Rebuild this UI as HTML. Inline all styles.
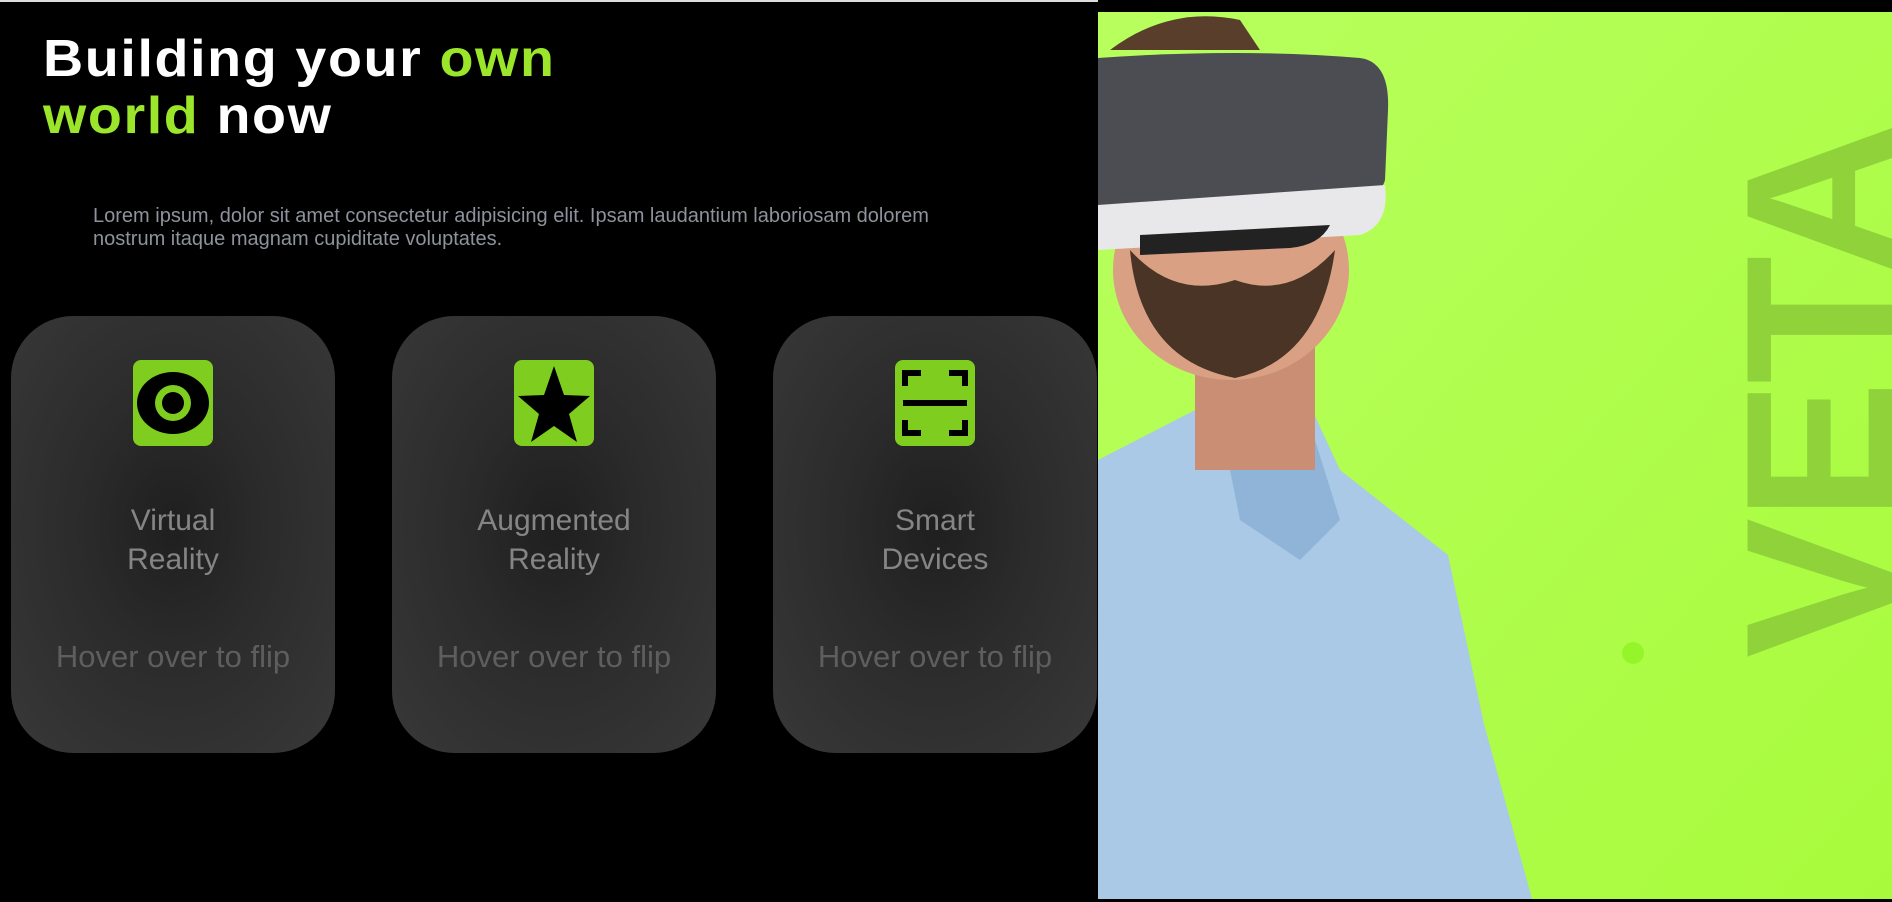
<!DOCTYPE html>
<html><head><meta charset="utf-8"><style>
*{margin:0;padding:0;box-sizing:border-box}
body{width:1892px;height:902px;background:#000;overflow:hidden;position:relative;font-family:"Liberation Sans",sans-serif}
.top{position:absolute;left:0;top:0;width:1892px;height:2px;background:#ddd}
h1{position:absolute;left:43px;top:31px;font-size:52px;line-height:57px;font-weight:700;color:#fff;letter-spacing:1.5px;transform:scaleX(1.07);transform-origin:left}
h1 span{color:#9be52a}
p{position:absolute;left:93px;top:205px;width:900px;font-size:20px;line-height:23px;color:#8d929c}
.card{position:absolute;top:316px;width:324px;height:437px;border-radius:62px;background:radial-gradient(ellipse at 50% 48%,#1f1f1f 0%,#2b2b2b 40%,#383838 100%)}
.ic{position:absolute;left:122px;top:44px;width:80px;height:86px;background:#7fcd1f;border-radius:8px}
.t{position:absolute;left:0;width:100%;top:185px;text-align:center;font-size:30px;line-height:39px;color:#858585}
.h{position:absolute;left:0;width:100%;top:323px;text-align:center;font-size:31px;color:#5e5e5e}
</style></head><body>
<div class="top"></div>
<h1>Building your <span>own</span><br><span>world</span> now</h1>
<p>Lorem ipsum, dolor sit amet consectetur adipisicing elit. Ipsam laudantium laboriosam dolorem nostrum itaque magnam cupiditate voluptates.</p>

<div class="card" style="left:11px"><div class="ic"><svg width="80" height="86" viewBox="0 0 80 86"><ellipse cx="40" cy="43" rx="36" ry="31" fill="#000"/><ellipse cx="40" cy="43" rx="18" ry="18" fill="#7fcd1f"/><ellipse cx="40" cy="43" rx="11" ry="11" fill="#000"/></svg></div><div class="t">Virtual<br>Reality</div><div class="h">Hover over to flip</div></div>

<div class="card" style="left:392px"><div class="ic"><svg width="80" height="86" viewBox="0 0 80 86"><polygon points="40,6 50,35 76,36 55,54 63,82 40,66 17,82 25,54 4,36 30,35" fill="#000"/></svg></div><div class="t">Augmented<br>Reality</div><div class="h">Hover over to flip</div></div>

<div class="card" style="left:773px"><div class="ic"><svg width="80" height="86" viewBox="0 0 80 86" fill="none" stroke="#000" stroke-width="6"><path d="M10 26V13H26M54 13H70V26M10 60V73H26M54 73H70V60"/><path d="M8 43H72"/></svg></div><div class="t">Smart<br>Devices</div><div class="h">Hover over to flip</div></div>

<svg style="position:absolute;left:0;top:0" width="1892" height="902">
<defs><linearGradient id="g" x1="0" y1="0" x2="1" y2="1"><stop offset="0" stop-color="#b8ff5e"/><stop offset="1" stop-color="#a8fb3c"/></linearGradient></defs>
<rect x="1098" y="12" width="794" height="887" fill="url(#g)"/>
<text transform="translate(1892,658) rotate(-90)" font-family="Liberation Sans" font-weight="700" font-size="210" fill="#8fd23a" letter-spacing="-3">VETA</text>
<circle cx="1633" cy="653" r="11" fill="#96f52a"/>
<polygon points="1098,460 1205,405 1315,416 1340,470 1448,555 1484,724 1532,899 1098,899" fill="#a9c9e6"/>
<polygon points="1230,470 1315,440 1340,520 1300,560 1240,520" fill="#8fb4d8"/>
<rect x="1195" y="340" width="120" height="130" fill="#c98e74"/>
<ellipse cx="1231" cy="270" rx="118" ry="110" fill="#d9a083"/>
<path d="M1130 250 Q1140 360 1235 378 Q1320 360 1335 250 Q1290 300 1235 280 Q1175 300 1130 250Z" fill="#4a3426"/>
<path d="M1110 50 Q1170 5 1240 20 L1260 50 Z" fill="#5a3e2c"/>
<path d="M1098 58 Q1240 48 1360 58 Q1390 62 1388 110 L1385 180 Q1380 200 1340 202 L1098 210Z" fill="#4b4d52"/>
<path d="M1098 205 L1385 185 Q1390 225 1360 235 L1098 250Z" fill="#e8e8ea"/>
<path d="M1140 235 L1330 225 Q1320 245 1290 248 L1140 255Z" fill="#222"/>
<rect x="1098" y="0" width="794" height="12" fill="#000"/>
<rect x="1098" y="899" width="794" height="3" fill="#000"/>
</svg>
</body></html>
